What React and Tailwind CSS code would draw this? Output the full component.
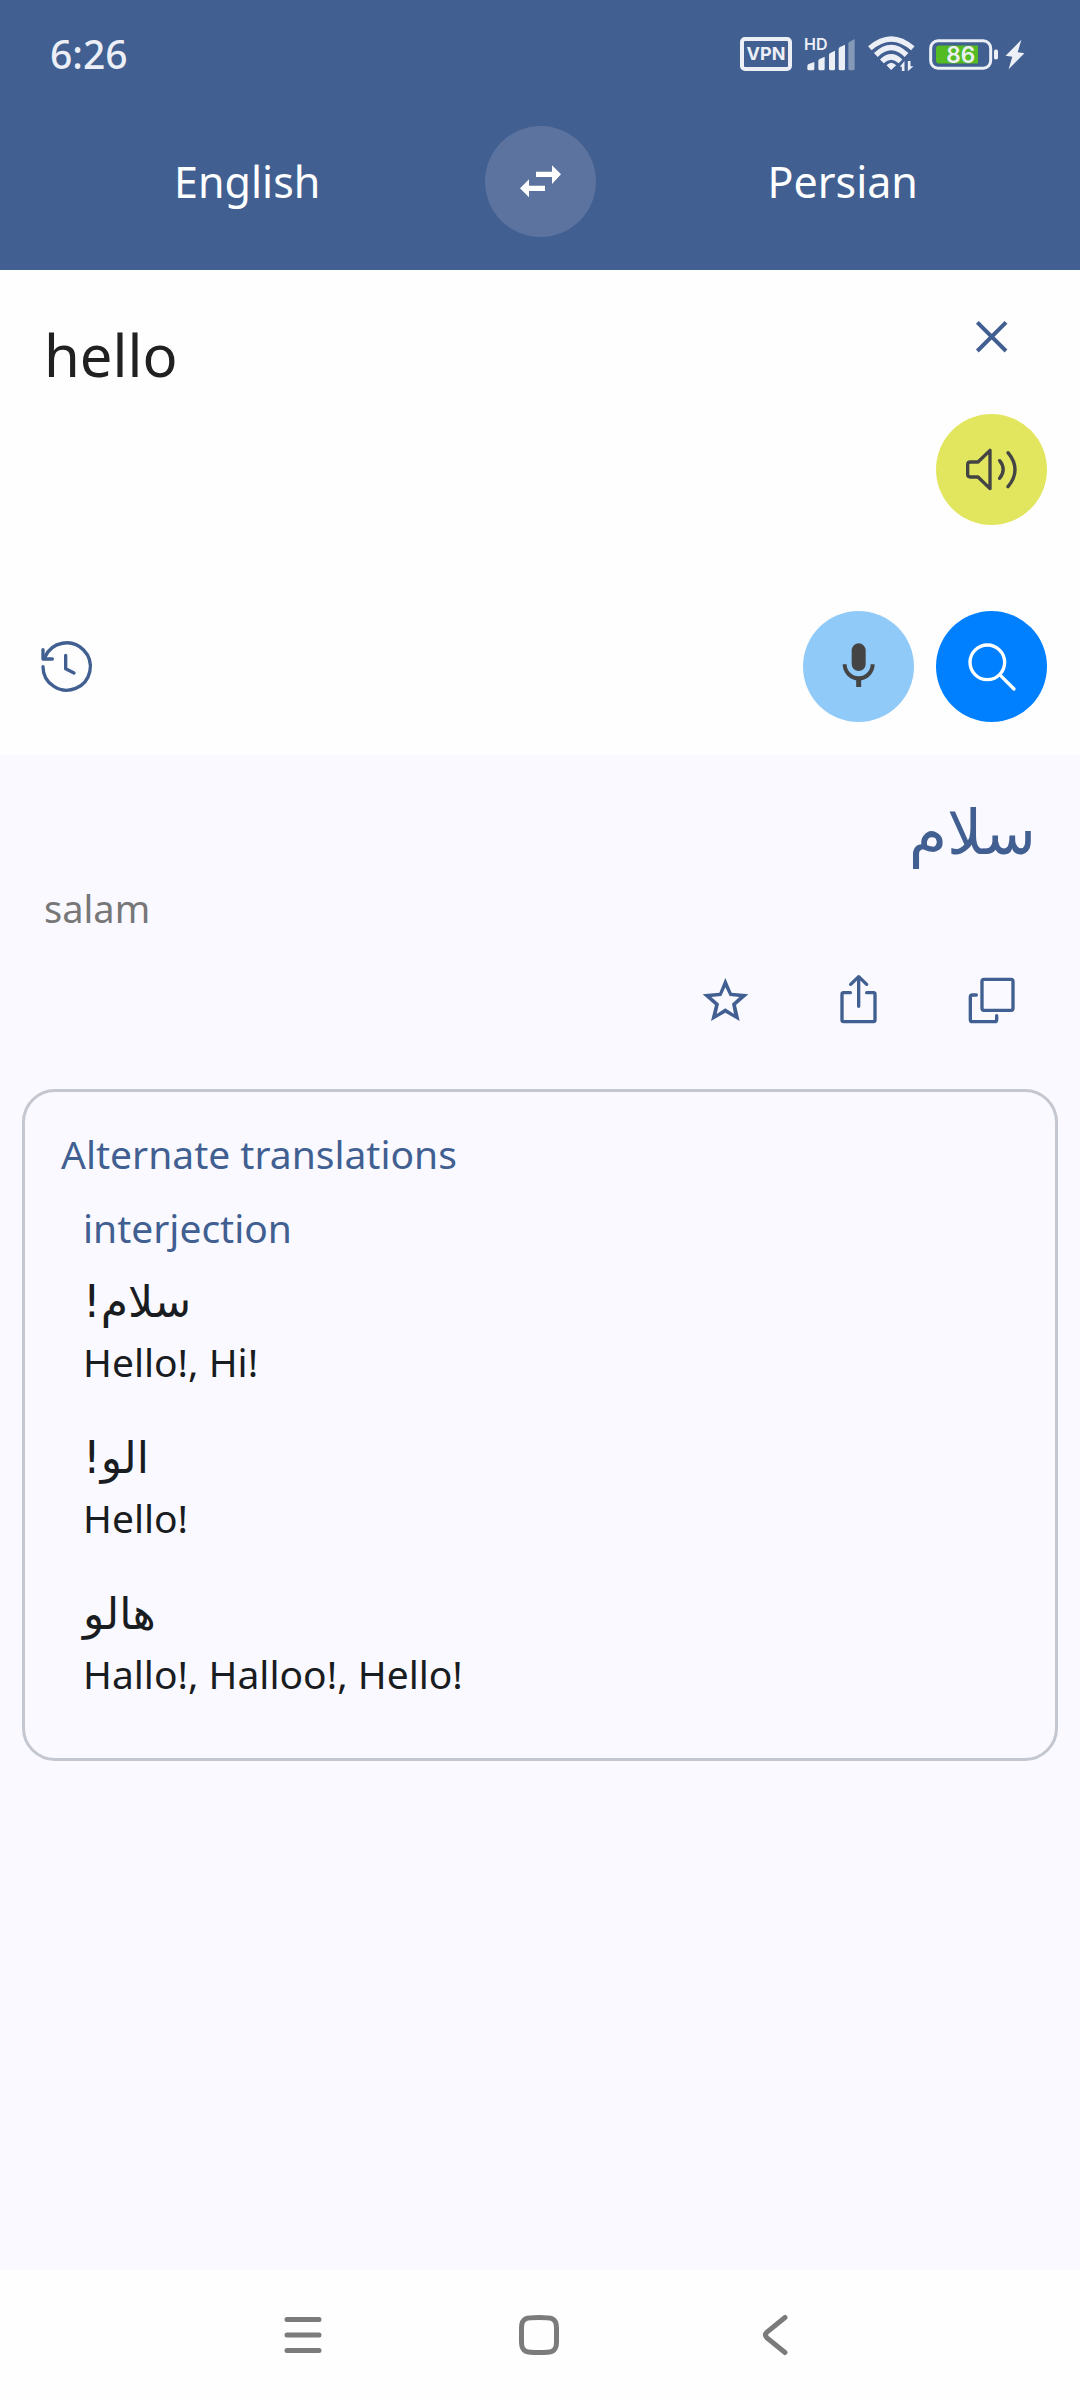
import React, { useState } from 'react';

const alternates = [
  { word: 'سلام!', meanings: 'Hello!, Hi!' },
  { word: 'الو!', meanings: 'Hello!' },
  { word: 'هالو', meanings: 'Hallo!, Halloo!, Hello!' },
];

// All action icons share one 333 unit grid inside a 111px round button
const Icon = ({ children, width = 10 }) => (
  <svg
    viewBox="0 0 333 333"
    className="w-full h-full"
    fill="none"
    stroke="currentColor"
    strokeWidth={width}
    strokeLinecap="round"
    strokeLinejoin="round"
    aria-hidden="true"
  >
    {children}
  </svg>
);

const RoundButton = ({ label, className = '', children, ...rest }) => (
  <button type="button" aria-label={label} className={`w-[111px] h-[111px] shrink-0 rounded-full ${className}`} {...rest}>
    {children}
  </button>
);

const StatusBar = () => (
  <div className="h-[108px] pl-[50px] pr-[55px] flex items-center justify-between text-[#eceff6]">
    <span className="text-[39px] leading-[48px] font-medium">6:26</span>
    <div className="flex items-center gap-3">
      <span className="w-[52px] h-[34px] rounded-[5px] border-4 border-[#eceff6] flex items-center justify-center font-['Inter'] text-[18px] leading-none font-bold">
        VPN
      </span>
      <svg viewBox="252 35 156 135" className="w-[52px] h-[45px]" fill="currentColor" aria-hidden="true">
        <text x="252" y="90" fontSize="48" fontWeight="600" fontFamily="Inter, sans-serif">HD</text>
        <path d="M262 137q0-4 4-6l17-6v20q0 5-5 5h-11q-5 0-5-5z" />
        <path d="M295 122q0-4 4-6l15-7v36q0 5-5 5h-9q-5 0-5-5z" />
        <path d="M327 104q0-4 4-6l14-7v54q0 5-5 5h-8q-5 0-5-5z" />
        <path d="M356 86q0-4 4-6l15-7v72q0 5-5 5h-9q-5 0-5-5z" />
        <path opacity=".4" d="M385 70q0-4 4-6l15-8v89q0 5-5 5h-9q-5 0-5-5z" />
      </svg>
      <svg viewBox="443 52 140 108" className="w-[47px] h-[36px]" fill="none" stroke="currentColor" strokeWidth="16" aria-hidden="true">
        <path d="M448 89Q512 33 577 89" />
        <path d="M466 109Q512 64 558 109" />
        <path d="M484 128Q512 101 540 128" />
        <path d="M498 140Q512 124 527 140L512 154Z" fill="currentColor" stroke="none" />
        <path d="M538 144l14-17v30h-8v-13zM562 127h8v16h9l-17 15z" fill="currentColor" stroke="none" />
      </svg>
      <div className="flex items-center gap-[7px] pl-[2px]">
        <svg viewBox="627 56 207 92" className="w-[69px] h-[31px]" aria-hidden="true">
          <rect x="632" y="61" width="180" height="82" rx="22" fill="none" stroke="currentColor" strokeWidth="9" />
          <path d="M658 75h116v54H658q-10 0-10-10V85q0-10 10-10z" fill="#55bb22" />
          <rect x="822" y="87" width="12" height="30" rx="5" fill="currentColor" />
          <text x="722" y="127" fontSize="68" fontWeight="600" fontFamily="Inter, sans-serif" textAnchor="middle" fill="currentColor">86</text>
        </svg>
        <svg viewBox="855 56 58 92" className="w-[20px] h-[31px]" fill="currentColor" aria-hidden="true">
          <path d="M903 58L856 106L876 109L865 146L912 98L892 95Z" />
        </svg>
      </div>
    </div>
  </div>
);

const LanguageBar = () => (
  <div className="pt-[18px] pb-[33px] flex items-center text-white text-[43px] leading-[56px]">
    <button type="button" className="flex-1 pl-[10px]">English</button>
    <RoundButton label="Swap languages" className="bg-[#5c739f]">
      <Icon>
        <path
          fill="currentColor"
          stroke="none"
          d="M153 137h48v-19l27 27-27 29v-21h-48zM180 195h-48v19l-27-27 27-27v19h48z"
        />
      </Icon>
    </RoundButton>
    <button type="button" className="flex-1 pl-[10px]">Persian</button>
  </div>
);

const App = () => {
  const [text, setText] = useState('hello');

  return (
    <div className="min-h-screen flex flex-col bg-[#f9f9ff] font-['Noto_Sans','DejaVu_Sans',sans-serif] text-[#191c20]">
      <header className="bg-[#415f91]">
        <StatusBar />
        <LanguageBar />
      </header>

      <section className="bg-[#fefefe] pt-[11px] pb-[33px] pr-[33px]">
        <div className="flex">
          <textarea
            aria-label="Text to translate"
            value={text}
            onChange={(e) => setText(e.target.value)}
            className="flex-1 min-w-0 pt-[34px] pl-11 text-[58px] leading-[80px] text-[#212121] bg-transparent resize-none outline-none"
          />
          <div className="flex flex-col gap-[22px]">
            <RoundButton label="Clear" className="text-[#415f91]" onClick={() => setText('')}>
              <Icon width={12}>
                <path strokeLinecap="butt" d="M124 124L210 210M210 124L124 210" />
              </Icon>
            </RoundButton>
            <RoundButton label="Listen" className="bg-[#e2e65f] text-[#444444]">
              <Icon>
                <path d="M162 109V224L126 189H103Q95 189 95 181V152Q95 144 103 144H126Z" />
                <path d="M191 140Q212 166 191 193M216 116Q258 167 216 218" />
              </Icon>
            </RoundButton>
          </div>
        </div>

        <div className="mt-[86px] pl-[11px] flex items-center gap-[22px]">
          <RoundButton label="History" className="mr-auto text-[#415f91]">
            <Icon>
              <path d="M96 167A71 71 0 1 0 102 138" />
              <path d="M96 116V144H124" />
              <path d="M164 133V173L189 186" />
            </Icon>
          </RoundButton>
          <RoundButton label="Voice input" className="bg-[#90caf9] text-[#444444]">
            <Icon width={12}>
              <rect x="146" y="97" width="42" height="83" rx="21" fill="currentColor" stroke="none" />
              <path strokeLinecap="butt" d="M125 160A42 42 0 0 0 209 160" />
              <path strokeLinecap="butt" strokeWidth="15" d="M167 202V228" />
            </Icon>
          </RoundButton>
          <RoundButton label="Translate" className="bg-[#0080ff] text-white">
            <Icon>
              <circle cx="154" cy="154" r="52" />
              <path d="M194 194L234 234" />
            </Icon>
          </RoundButton>
        </div>
      </section>

      <main className="flex-1 pt-[38px]">
        <p dir="rtl" lang="fa" className="px-11 font-['DejaVu_Sans',sans-serif] text-[62px] leading-[80px] text-[#415f91]">سلام</p>
        <p className="px-11 pt-[7px] text-[38px] leading-[56px] text-[#777777]">salam</p>

        <div className="mt-2 pr-[33px] flex justify-end gap-[22px] text-[#415f91]">
          <RoundButton label="Add to favorites">
            <Icon>
              <path
                fill="currentColor"
                stroke="none"
                fillRule="evenodd"
                d="M166 102L185 146L235 151L198 183L209 231L166 206L123 231L135 183L98 151L148 146ZM166 130L154 156L124 159L147 179L140 210L166 193L192 210L186 179L208 159L179 156Z"
              />
            </Icon>
          </RoundButton>
          <RoundButton label="Share">
            <Icon>
              <path d="M142 146H122Q117 146 117 151V228Q117 233 122 233H211Q216 233 216 228V151Q216 146 211 146H191" />
              <path d="M167 187V98M143 121L167 98L191 121" />
            </Icon>
          </RoundButton>
          <RoundButton label="Copy">
            <Icon>
              <rect x="138" y="106" width="93" height="93" rx="6" />
              <path d="M121 153H109Q103 153 103 159V227Q103 233 109 233H176Q182 233 182 227V215" />
            </Icon>
          </RoundButton>
        </div>

        <article className="mt-[34px] mx-[22px] pt-8 pb-[54px] px-9 rounded-[33px] border-3 border-[#c4c6d0]">
          <h2 className="text-[39px] leading-[60px] text-[#415f91]">Alternate translations</h2>
          <div className="pl-[22px]">
            <h3 className="mt-[14px] text-[39px] leading-[60px] text-[#415f91]">interjection</h3>
            <ul className="mt-[14px] flex flex-col gap-9">
              {alternates.map((item) => (
                <li key={item.word}>
                  <p lang="fa" className="font-['DejaVu_Sans',sans-serif] text-[44px] leading-[60px]">
                    <bdi dir="rtl">{item.word}</bdi>
                  </p>
                  <p className="text-[39px] leading-[60px]">{item.meanings}</p>
                </li>
              ))}
            </ul>
          </div>
        </article>
      </main>

      <nav className="h-[130px] pr-[2px] bg-[#fefefe] flex justify-center text-[#7b7b7b]">
        <button type="button" aria-label="Recent apps" className="w-[236px] flex items-center justify-center">
          <svg viewBox="0 0 40 42" className="w-10 h-[42px]" fill="none" stroke="currentColor" strokeWidth="5" strokeLinecap="round">
            <path d="M4 5.500H36M4 21H36M4 36.500H36" />
          </svg>
        </button>
        <button type="button" aria-label="Home" className="w-[236px] flex items-center justify-center">
          <svg viewBox="0 0 42 42" className="w-[42px] h-[42px]" fill="none" stroke="currentColor" strokeWidth="5">
            <path d="M21 3.500C33 3.500 38.500 3.500 38.500 14V28C38.500 38.500 33 38.500 21 38.500S3.500 38.500 3.500 28V14C3.500 3.500 9 3.500 21 3.500Z" />
          </svg>
        </button>
        <button type="button" aria-label="Back" className="w-[236px] flex items-center justify-center">
          <svg viewBox="0 0 26 42" className="w-[26px] h-[42px]" fill="none" stroke="currentColor" strokeWidth="5" strokeLinecap="round">
            <path d="M23 3.500L5 18Q2 21 5 24L23 38.500" />
          </svg>
        </button>
      </nav>
    </div>
  );
};

export default App;
